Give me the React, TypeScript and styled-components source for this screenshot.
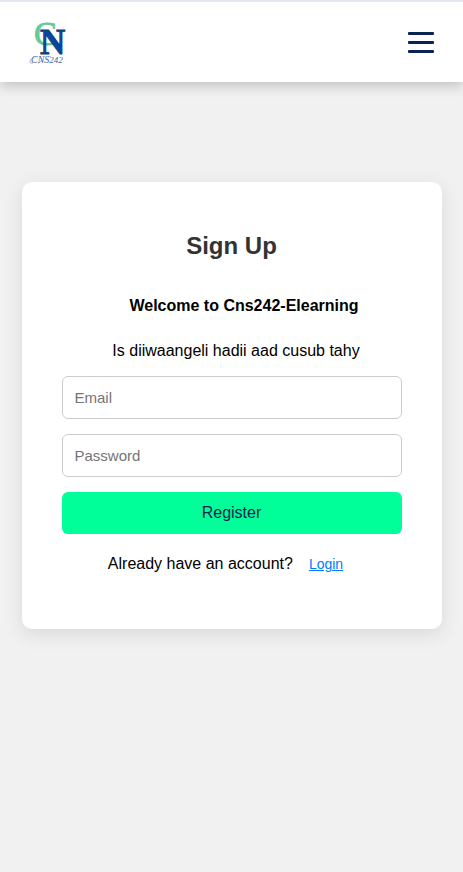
import React from "react";
import styled, { createGlobalStyle } from "styled-components";

const GlobalStyle = createGlobalStyle`
  *, *::before, *::after { box-sizing: border-box; }
  body {
    margin: 0;
    background: #f1f1f1;
    color: #000;
    font-family: "Liberation Sans", Arial, sans-serif;
    font-size: 16px;
    line-height: 18px;
  }
`;

const Header = styled.header`
  display: flex;
  align-items: center;
  justify-content: space-between;
  height: 82px;
  padding: 0 29px;
  background: #fff;
  border-top: 2px solid #e3e7f0;
  box-shadow: 0 4px 12px rgba(0, 0, 0, 0.2);
`;

const LogoLink = styled.a`
  display: block;
  height: 48px;
`;

const MenuButton = styled.button`
  display: flex;
  flex-direction: column;
  gap: 6px;
  padding: 0;
  border: 0;
  background: none;
  cursor: pointer;
`;

const MenuBar = styled.span`
  width: 26px;
  height: 3px;
  border-radius: 1px;
  background: #0a2351;
`;

const Main = styled.main`
  display: flex;
  justify-content: center;
  padding: 100px 20px;
`;

const Card = styled.form`
  display: flex;
  flex-direction: column;
  width: 100%;
  max-width: 420px;
  padding: 50px 40px 56px;
  background: #fff;
  border-radius: 10px;
  box-shadow: 0 5px 20px rgba(0, 0, 0, 0.1);
  text-align: center;
`;

const Title = styled.h1`
  margin: 0 0 37px;
  color: #333;
  font-size: 24px;
  line-height: 28px;
`;

const Welcome = styled.h2`
  margin: 0 0 27px;
  padding-left: 25px;
  font-size: 16px;
  line-height: 18px;
`;

const Hint = styled.p`
  margin: 0 0 16px;
  padding-left: 9px;
`;

const Field = styled.input`
  width: 100%;
  height: 43px;
  margin: 0 0 15px;
  padding: 0 12px;
  border: 1px solid #ccc;
  border-radius: 6px;
  background: #fff;
  font-family: inherit;
  font-size: 15px;

  &::placeholder { color: #757575; }
`;

const SubmitButton = styled.button`
  height: 42px;
  margin: 0 0 21px;
  padding: 0;
  border: 0;
  border-radius: 6px;
  background: #00ff99;
  color: #0a2351;
  font-family: inherit;
  font-size: 16px;
  cursor: pointer;
`;

const LoginPrompt = styled.p`
  display: flex;
  align-items: baseline;
  justify-content: center;
  gap: 16px;
  margin: 0;
  padding-right: 12px;
`;

const LoginLink = styled.a`
  color: #007bff;
  font-size: 14px;
`;

const LogoMark = styled.svg`
  display: block;
  overflow: visible;
`;

function Logo() {
  return (
    <LogoMark width="40" height="48" viewBox="0 0 40 48" role="img" aria-label="CNS242">
      <g fontFamily="'Liberation Serif', serif">
        <text x="5" y="27" fontSize="34" fill="#65c99b" stroke="#65c99b" strokeWidth="0.9">C</text>
        <text x="11" y="36" fontSize="35" fontWeight="bold" fill="#0647a6" stroke="#173b59" strokeWidth="0.8">N</text>
        <text x="2" y="45" fontSize="10" fontStyle="italic" fill="#446ca9">
          CNS<tspan fontSize="9">242</tspan>
        </text>
      </g>
      <path d="M7 39C4 38 1 42 1 44c0 2 3 1 5 0M9 45c2 0 3-1 4-4M19 39c1-1 2-1 3 0" fill="none" stroke="#6d8cbc" strokeWidth="0.6" />
    </LogoMark>
  );
}

export default function App() {
  return (
    <>
      <GlobalStyle />
      <Header>
        <LogoLink href="#home"><Logo /></LogoLink>
        <MenuButton type="button" aria-label="Open menu">
          <MenuBar />
          <MenuBar />
          <MenuBar />
        </MenuButton>
      </Header>
      <Main>
        <Card onSubmit={(event: React.FormEvent) => event.preventDefault()}>
          <Title>Sign Up</Title>
          <Welcome>Welcome to Cns242-Elearning</Welcome>
          <Hint>Is diiwaangeli hadii aad cusub tahy</Hint>
          <Field type="email" placeholder="Email" aria-label="Email" />
          <Field type="password" placeholder="Password" aria-label="Password" />
          <SubmitButton type="submit">Register</SubmitButton>
          <LoginPrompt>
            Already have an account?
            <LoginLink href="#login">Login</LoginLink>
          </LoginPrompt>
        </Card>
      </Main>
    </>
  );
}
